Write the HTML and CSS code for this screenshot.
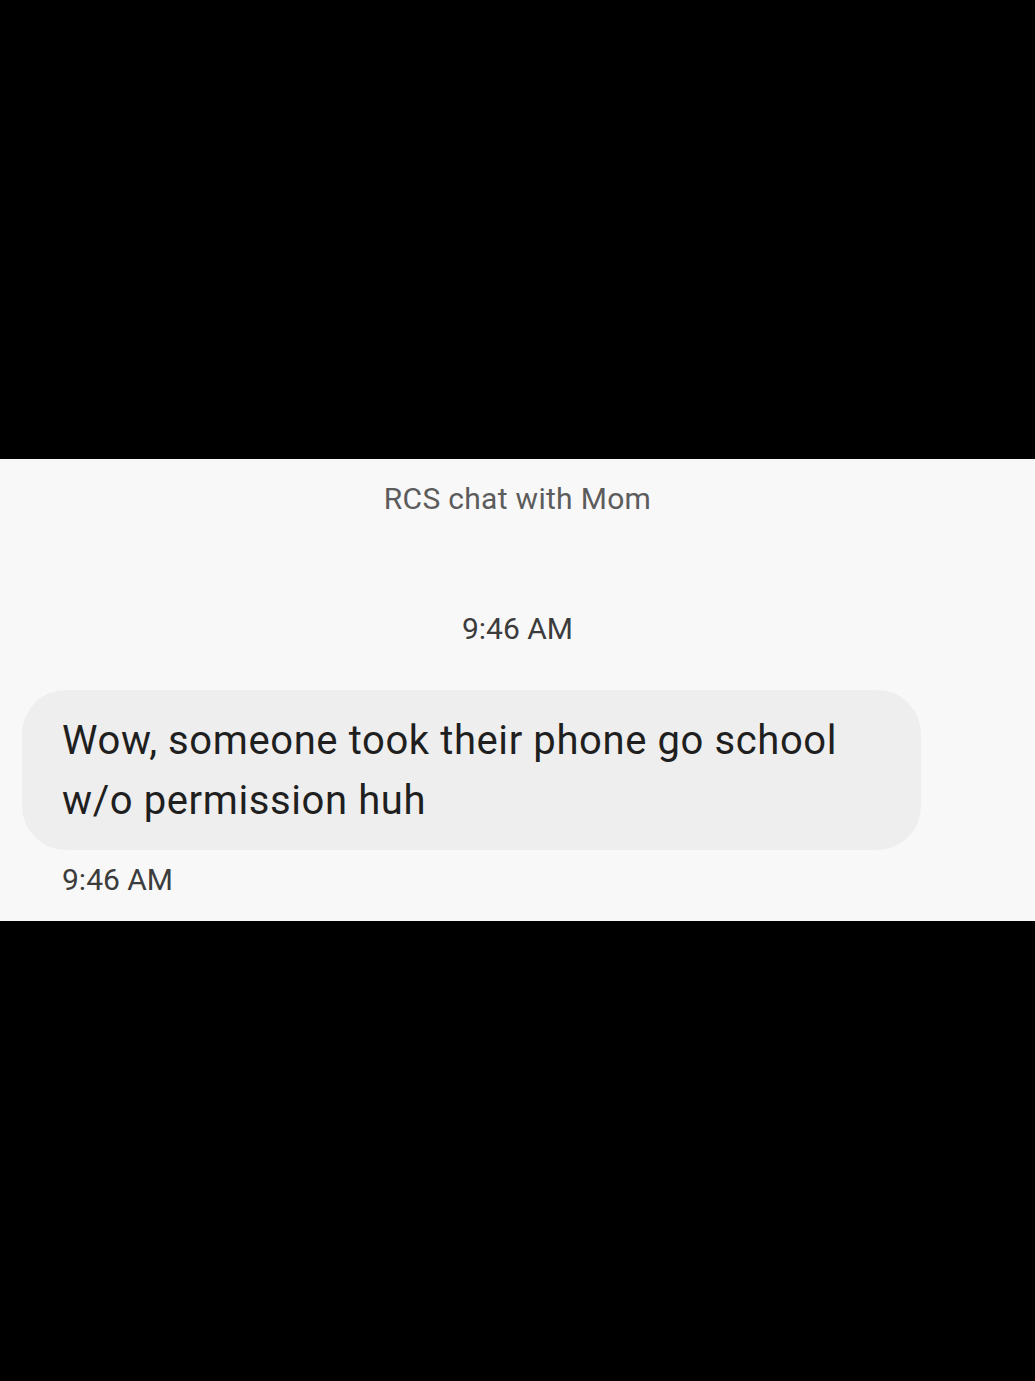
FILE: index.html
```html
<!DOCTYPE html>
<html>
<head>
<meta charset="utf-8">
<link rel="stylesheet" href="styles.css">
</head>
<body>
<div class="screen">
  <div class="black top"></div>
  <section class="chat">
    <div class="header">RCS chat with Mom</div>
    <div class="stamp">9:46 AM</div>
    <div class="msg">
      <div class="bubble">Wow, someone took their phone go school w/o permission huh</div>
      <div class="meta">9:46 AM</div>
    </div>
  </section>
  <div class="black bottom"></div>
</div>
</body>
</html>
```
FILE: styles.css
```css
html, body {
  margin: 0;
  padding: 0;
  background: #000;
}
.screen {
  width: 1035px;
  height: 1381px;
  display: flex;
  flex-direction: column;
  font-family: Roboto, "Liberation Sans", sans-serif;
}
.black { background: #000; }
.top { height: 459px; }
.bottom { flex: 1; }
.chat {
  height: 462px;
  background: #f8f8f8;
  display: flex;
  flex-direction: column;
  box-sizing: border-box;
  padding-top: 20px;
}
.header {
  text-align: center;
  font-size: 30px;
  letter-spacing: 0.3px;
  line-height: 40px;
  color: #5c5c5c;
}
.stamp {
  margin-top: 90px;
  text-align: center;
  font-size: 30px;
  line-height: 40px;
  color: #3c3c3c;
}
.msg {
  margin-top: 41px;
  padding-left: 22px;
}
.bubble {
  width: 899px;
  height: 160px;
  box-sizing: border-box;
  background: #eeeeee;
  border-radius: 44px;
  padding: 21px 40px 19px;
  font-size: 40px;
  letter-spacing: 0.6px;
  line-height: 60px;
  color: #1f1f1f;
}
.meta {
  margin-top: 13px;
  padding-left: 40px;
  font-size: 30px;
  line-height: 34px;
  color: #3c3c3c;
}
```
